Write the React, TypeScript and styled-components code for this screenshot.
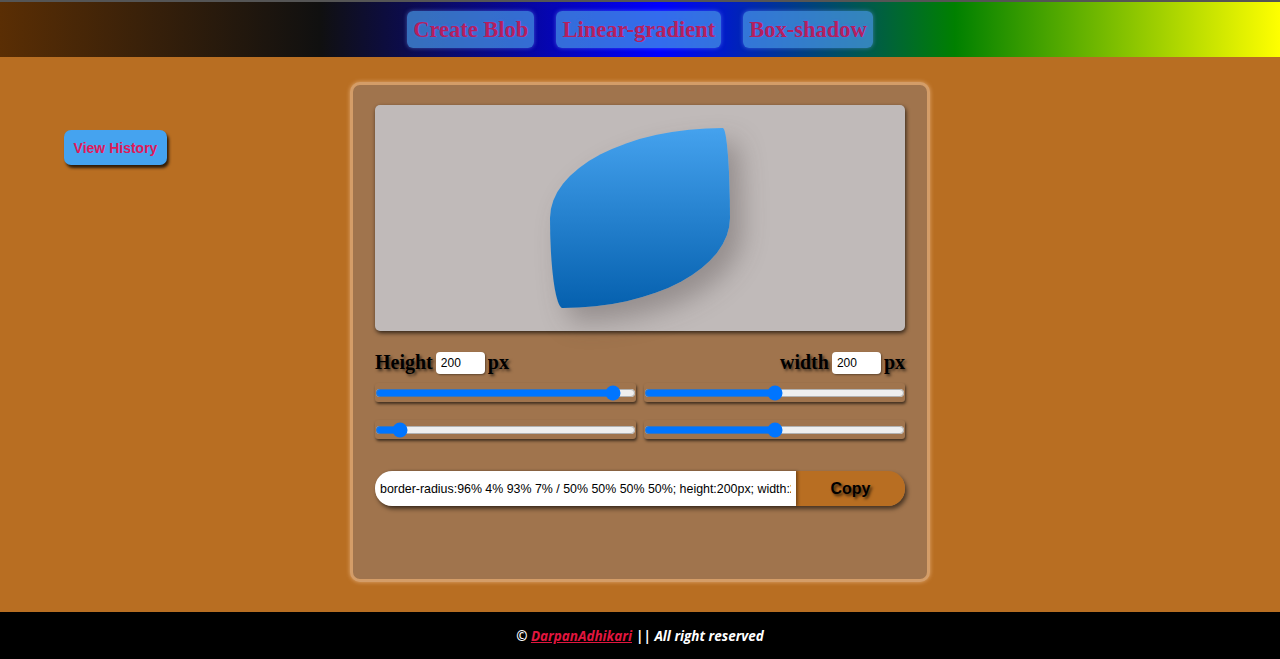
import React, { useState } from "react";
import styled, { createGlobalStyle } from "styled-components";

const Global = createGlobalStyle`
  html, body { margin: 0; padding: 0; }
  body { background: #b86e22; font-family: "Liberation Serif", serif; }
  #root { min-height: 659px; display: flex; flex-direction: column; }
`;

const Header = styled.header`
  height: 55px;
  border-top: 2px solid #555;
  background: linear-gradient(to right, #5a2e04, #101010 25%, #0000ff 51.5%, #008000 74.6%, #ffff00 100%);
  display: flex;
  align-items: center;
  justify-content: center;
  gap: 22px;
`;

const NavButton = styled.button`
  height: 37px;
  padding: 0 6px;
  border: none;
  border-radius: 6px;
  background: rgba(70, 150, 230, 0.72);
  box-shadow: 0 0 4px rgba(120, 160, 255, 0.5);
  color: #b51f5e;
  font-family: "Liberation Serif", serif;
  font-weight: bold;
  font-size: 22.5px;
  text-shadow: 0 0 3px rgba(90, 110, 255, 0.8);
  cursor: pointer;
`;

const Main = styled.main`
  flex: 1;
  display: grid;
  grid-template-columns: 350px 580px 1fr;
  align-items: start;
  padding: 25px 0 30px;
`;

const Side = styled.div`
  padding: 48px 0 0 64px;
`;

const HistoryButton = styled.button`
  width: 103px;
  height: 35px;
  padding: 0;
  border: none;
  border-radius: 7px;
  background: #45a3ef;
  color: #e2185a;
  font-family: "Liberation Sans", Arial, sans-serif;
  font-weight: bold;
  font-size: 14px;
  box-shadow: 2px 3px 3px rgba(0, 0, 0, 0.75);
  cursor: pointer;
`;

const Card = styled.section`
  border: 3px solid #d49d68;
  border-radius: 10px;
  background: #a0744d;
  box-shadow: 0 0 4px #e0a871;
  padding: 20px 22px;
  box-sizing: border-box;
  height: 500px;
  display: flex;
  flex-direction: column;
`;

const Preview = styled.div`
  height: 226px;
  background: #c0bab9;
  border-radius: 5px;
  box-shadow: 1px 2px 4px rgba(0, 0, 0, 0.7);
  display: flex;
  align-items: center;
  justify-content: center;
`;

const Blob = styled.div`
  width: 180px;
  height: 180px;
  background: linear-gradient(to bottom, #45a2ee, #0560ae);
  box-shadow: 12px 14px 26px rgba(70, 60, 60, 0.35);
`;

const SizeRow = styled.div`
  display: flex;
  justify-content: space-between;
  align-items: center;
  margin-top: 20px;
`;

const SizeLabel = styled.label`
  display: flex;
  align-items: center;
  gap: 3px;
  font-family: "Liberation Serif", serif;
  font-weight: bold;
  font-size: 20px;
  color: #000;
  text-shadow: 2px 2px 3px rgba(0, 0, 0, 0.6);
`;

const NumInput = styled.input`
  width: 49px;
  height: 22px;
  box-sizing: border-box;
  border: none;
  border-radius: 4px;
  padding: 0 5px;
  font-family: "Liberation Sans", Arial, sans-serif;
  font-size: 12px;
  background: #fff;
  color: #000;
  box-shadow: 1px 1px 2px rgba(0, 0, 0, 0.4);
  outline: none;
`;

const SliderGrid = styled.div`
  display: grid;
  grid-template-columns: 1fr 1fr;
  column-gap: 8px;
  row-gap: 18px;
  margin-top: 9px;
`;

const SliderBox = styled.div`
  height: 19px;
  border-radius: 3px;
  background: #a0744d;
  box-shadow: 1px 2px 3px rgba(0, 0, 0, 0.6);
  display: flex;
  align-items: center;
`;

const Range = styled.input`
  width: 100%;
  margin: 0;
  accent-color: #0075ff;
`;

const CodeBar = styled.div`
  display: flex;
  height: 35px;
  margin-top: 32px;
  border-radius: 17px;
  box-shadow: 2px 3px 4px rgba(0, 0, 0, 0.55);
`;

const CodeText = styled.input`
  flex: 1;
  min-width: 0;
  border: none;
  border-radius: 17px 0 0 17px;
  padding: 0 5px;
  font-family: "Liberation Sans", Arial, sans-serif;
  font-size: 12.4px;
  color: #000;
  background: #fff;
  outline: none;
  box-shadow: 2px 0 3px rgba(0, 0, 0, 0.35);
  z-index: 1;
`;

const CopyButton = styled.button`
  width: 109px;
  border: none;
  border-radius: 0 17px 17px 0;
  background: #b86e22;
  font-family: "Liberation Sans", Arial, sans-serif;
  font-weight: bold;
  font-size: 16px;
  color: #000;
  text-shadow: 2px 2px 3px rgba(0, 0, 0, 0.7);
  cursor: pointer;
`;

const Footer = styled.footer`
  height: 47px;
  background: #000;
  display: flex;
  align-items: center;
  justify-content: center;
  font-family: "Open Sans", "Noto Sans", sans-serif;
  font-style: italic;
  font-weight: bold;
  font-size: 13.5px;
  color: #fff;
`;

const FooterLink = styled.a`
  color: #e2163f;
  text-decoration: underline;
  margin: 0 4px 0 0;
`;

export default function App() {
  const [h, setH] = useState(200);
  const [w, setW] = useState(200);
  const [vals, setVals] = useState([94, 50, 7, 50]);
  const shown = "96% 4% 93% 7% / 50% 50% 50% 50%";
  const code = `border-radius:${shown}; height:${h}px; width:${w}px;`;
  const setVal = (i: number, v: number) => setVals(vals.map((x, j) => (j === i ? v : x)));
  return (
    <>
      <Global />
      <Header>
        <NavButton>Create Blob</NavButton>
        <NavButton>Linear-gradient</NavButton>
        <NavButton>Box-shadow</NavButton>
      </Header>
      <Main>
        <Side>
          <HistoryButton>View History</HistoryButton>
        </Side>
        <Card>
          <Preview>
            <Blob style={{ borderRadius: shown }} />
          </Preview>
          <SizeRow>
            <SizeLabel>
              Height <NumInput value={h} onChange={(e) => setH(Number(e.target.value) || 0)} /> px
            </SizeLabel>
            <SizeLabel>
              width <NumInput value={w} onChange={(e) => setW(Number(e.target.value) || 0)} /> px
            </SizeLabel>
          </SizeRow>
          <SliderGrid>
            {vals.map((v, i) => (
              <SliderBox key={i}>
                <Range type="range" min={0} max={100} value={v} onChange={(e) => setVal(i, Number(e.target.value))} />
              </SliderBox>
            ))}
          </SliderGrid>
          <CodeBar>
            <CodeText readOnly value={code} />
            <CopyButton>Copy</CopyButton>
          </CodeBar>
        </Card>
      </Main>
      <Footer>
        ©&nbsp;<FooterLink href="#"> DarpanAdhikari</FooterLink>|| All right reserved
      </Footer>
    </>
  );
}
